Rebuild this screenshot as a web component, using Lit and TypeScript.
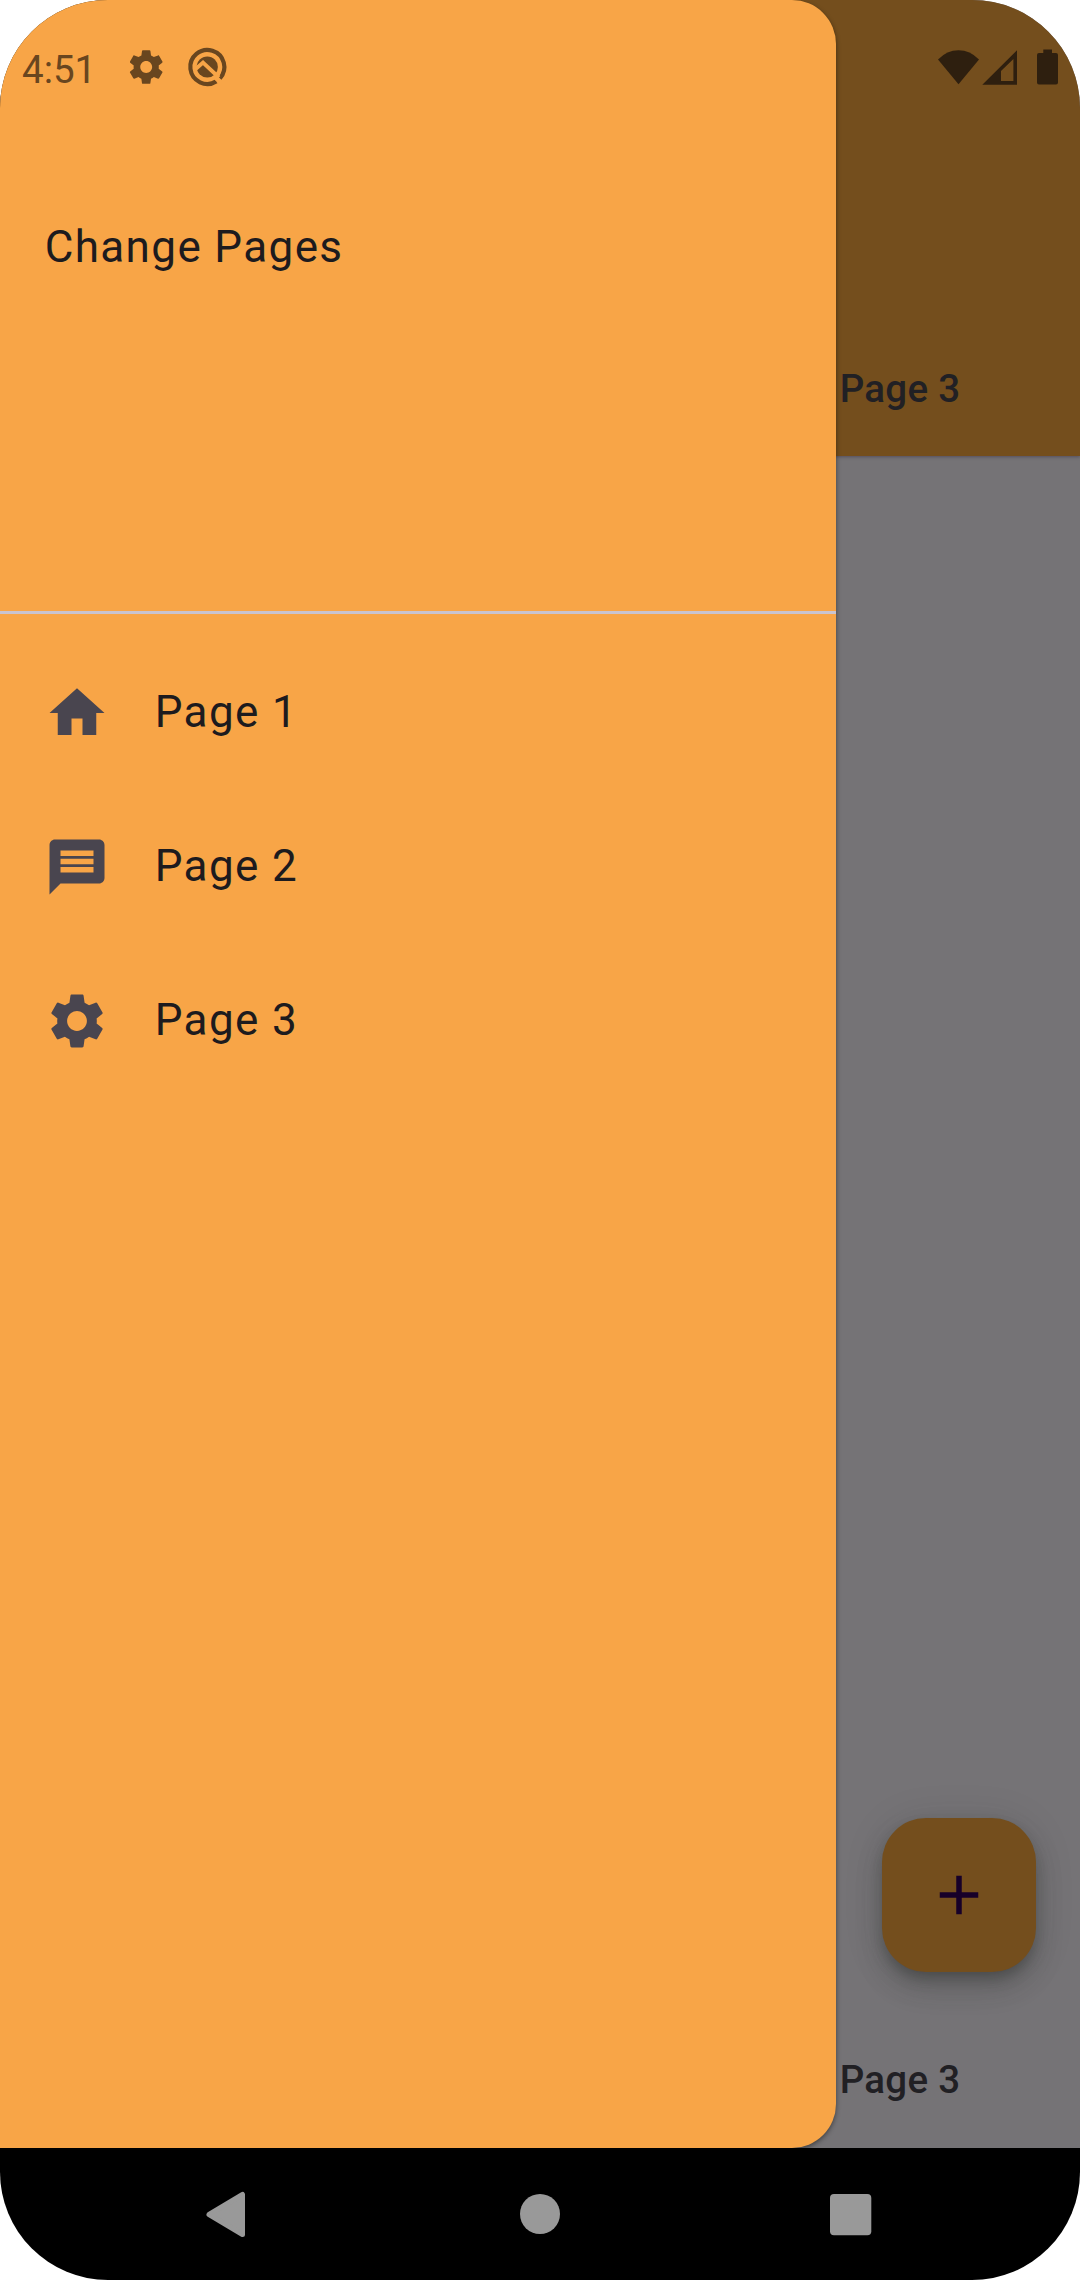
import { LitElement, html, css, svg } from "lit";
import { customElement } from "lit/decorators.js";

const GEAR =
  "M19.14 12.94c.04-.3.06-.61.06-.94 0-.32-.02-.64-.07-.94l2.03-1.58c.18-.14.23-.41.12-.61l-1.92-3.32c-.12-.22-.37-.29-.59-.22l-2.39.96c-.5-.38-1.03-.7-1.62-.94l-.36-2.54c-.04-.24-.24-.41-.48-.41h-3.84c-.24 0-.43.17-.47.41l-.36 2.54c-.59.24-1.13.57-1.62.94l-2.39-.96c-.22-.08-.47 0-.59.22L2.74 8.87c-.12.21-.08.47.12.61l2.03 1.58c-.05.3-.09.63-.09.94s.02.64.07.94l-2.03 1.58c-.18.14-.23.41-.12.61l1.92 3.32c.12.22.37.29.59.22l2.39-.96c.5.38 1.03.7 1.62.94l.36 2.54c.05.24.24.41.48.41h3.84c.24 0 .44-.17.47-.41l.36-2.54c.59-.24 1.13-.56 1.62-.94l2.39.96c.22.08.47 0 .59-.22l1.92-3.32c.12-.22.07-.47-.12-.61l-2.01-1.58z";
const GEAR_STATUS = GEAR + "M12 15.4c-1.87 0-3.4-1.53-3.4-3.4s1.53-3.4 3.4-3.4 3.4 1.53 3.4 3.4-1.53 3.4-3.4 3.4z";
const GEAR_LIST = GEAR + "M12 15.6c-1.98 0-3.6-1.62-3.6-3.6s1.62-3.6 3.6-3.6 3.6 1.62 3.6 3.6-1.62 3.6-3.6 3.6z";

const ENTRIES = [
  { label: "Page 1", path: "M10 20v-6h4v6h5v-8h3L12 3 2 12h3v8z" },
  {
    label: "Page 2",
    path: "M20 2H4c-1.1 0-1.99.9-1.99 2L2 22l4-4h14c1.1 0 2-.9 2-2V4c0-1.1-.9-2-2-2zm-2 12H6v-2h12v2zm0-3H6V9h12v2zm0-3H6V6h12v2z",
  },
  { label: "Page 3", path: GEAR_LIST },
];

@customElement("app-root")
export class AppRoot extends LitElement {
  static styles = css`
    :host {
      display: block;
      background: #fff;
      font-family: Roboto, sans-serif;
    }
    svg {
      display: block;
      flex: none;
    }
    .device {
      position: relative;
      display: flex;
      flex-direction: column;
      height: 2280px;
      width: 1080px;
      border-radius: 108px;
      overflow: hidden;
    }
    .app {
      position: relative;
      flex: 1;
      display: flex;
      flex-direction: column;
      background: #757376;
      overflow: hidden;
    }
    .appbar {
      height: 456px;
      box-sizing: border-box;
      padding-bottom: 4px;
      background: #744e1d;
      display: flex;
      flex-direction: column;
      justify-content: flex-end;
      box-shadow: 0 1px 3px rgba(60, 50, 75, 0.55);
    }
    .tabs {
      display: flex;
      justify-content: flex-end;
    }
    .tab {
      width: 360px;
      height: 127px;
      display: flex;
      align-items: center;
      justify-content: center;
      font-size: 38.5px;
      line-height: 55px;
      font-weight: 500;
      letter-spacing: 0.275px;
      color: #212024;
    }
    .content {
      flex: 1;
      display: flex;
      justify-content: flex-end;
      align-items: flex-end;
      padding: 0 44px 44px 0;
    }
    .fab {
      width: 154px;
      height: 154px;
      border-radius: 44px;
      background: #744e1d;
      display: flex;
      align-items: center;
      justify-content: center;
      box-shadow: 0 8px 14px -3px rgba(40, 44, 40, 0.42), 0 16px 28px rgba(40, 44, 40, 0.2),
        0 3px 40px rgba(40, 44, 40, 0.12);
    }
    .bottom {
      height: 132px;
    }
    .drawer {
      position: absolute;
      left: 0;
      top: 0;
      width: 836px;
      height: 2148px;
      border-radius: 0 44px 44px 0;
      background: #f8a547;
      box-shadow: 0 2px 5px rgba(0, 0, 0, 0.45);
      color: #1d1b1e;
      font-size: 44px;
      line-height: 66px;
      letter-spacing: 1.375px;
    }
    .header {
      box-sizing: border-box;
      height: 614px;
      padding: 214px 44px 0 44.7px;
      border-bottom: 3px solid #cac4cf;
    }
    .list {
      padding-top: 22px;
    }
    .item {
      height: 154px;
      padding-left: 44px;
      display: flex;
      align-items: center;
      gap: 44.7px;
    }
    .label {
      padding-bottom: 2px;
    }
    .status {
      position: absolute;
      left: 0;
      top: 0;
      width: 1080px;
      height: 134px;
      box-sizing: border-box;
      padding: 0 20px 0 22px;
      display: flex;
      align-items: center;
      justify-content: space-between;
    }
    .group {
      display: flex;
      align-items: center;
    }
    .time {
      font-size: 38.5px;
      line-height: 46px;
      color: #69461f;
      width: 104px;
      padding-top: 6px;
    }
    .nav {
      height: 132px;
      display: flex;
      align-items: center;
      background: #000;
    }
  `;

  render() {
    return html`
      <div class="device">
        <div class="app">
          <div class="appbar">
            <div class="tabs"><div class="tab">Page 3</div></div>
          </div>
          <div class="content">
            <div class="fab">
              <svg width="66" height="66" viewBox="0 0 24 24" fill="#170029">
                <path d="M19 13h-6v6h-2v-6H5v-2h6V5h2v6h6v2z" />
              </svg>
            </div>
          </div>
          <div class="bottom tabs"><div class="tab">Page 3</div></div>
          <div class="drawer">
            <div class="header">Change Pages</div>
            <div class="list">
              ${ENTRIES.map(
                (e) => html`<div class="item">
                  <svg width="66" height="66" viewBox="0 0 24 24" fill="#49454f">${svg`<path fill-rule="evenodd" d=${e.path} />`}</svg>
                  <span class="label">${e.label}</span>
                </div>`
              )}
            </div>
          </div>
        </div>
        <div class="status">
          <div class="group">
            <span class="time">4:51</span>
            <svg width="106" height="60" viewBox="126 37 106 60" fill="#69461f">
              <g transform="translate(125.2 46.4) scale(1.75)">
                <path transform="translate(0 -.2)" fill-rule="evenodd" d=${GEAR_STATUS} />
              </g>
              <path
                d="M216.3 81.4A17 17 0 1 1 219.9 78.4"
                fill="none"
                stroke="#69461f"
                stroke-width="4.2"
              />
              <circle cx="207.3" cy="67" r="10.6" />
              <path
                d="M194.5 70L203 62.6L219 77.5"
                fill="none"
                stroke="#f8a547"
                stroke-width="3.8"
              />
              <path d="M219.9 78.4L216.3 81.4L213 78L216.5 75Z" fill="#f8a547" />
            </svg>
          </div>
          <div class="group">
            <svg width="124" height="60" viewBox="936 37 124 60" fill="#2e1f0f">
              <path d="M958.5 84.3L938 59.5Q947 50.3 958.5 50.3T979 59.5Z" />
              <path
                fill-rule="evenodd"
                d="M982.3 84.8L1017 50.3V84.8ZM1001 81H1013.4V59L1001 71Z"
              />
              <path
                d="M1043.3 49.5H1052V53H1056Q1058 53 1058 55V82.5Q1058 84.5 1056 84.5H1039Q1037 84.5 1037 82.5V55Q1037 53 1039 53H1043.3Z"
              />
            </svg>
          </div>
        </div>
        <div class="nav">
          <svg width="1080" height="132" viewBox="0 2148 1080 132" fill="#999">
            <path
              d="M209 2214.5L242.5 2194.5V2234.5Z"
              stroke="#999"
              stroke-width="5"
              stroke-linejoin="round"
            />
            <circle cx="540" cy="2214" r="20" />
            <rect x="830" y="2194" width="41.3" height="41.3" rx="4" />
          </svg>
        </div>
      </div>
    `;
  }
}
